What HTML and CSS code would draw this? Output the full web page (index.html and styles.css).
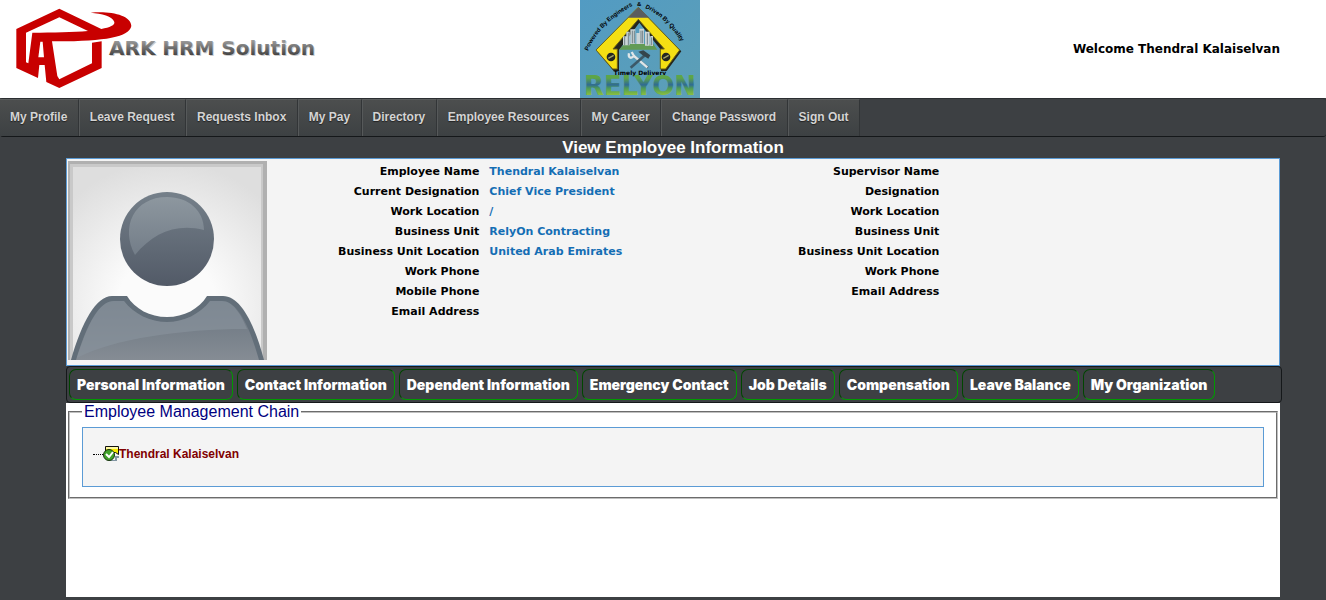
FILE: index.html
```html
<!DOCTYPE html>
<html lang="en">
<head>
<meta charset="utf-8">
<title>View Employee Information</title>
<link rel="stylesheet" href="styles.css">
</head>
<body>
<header class="header">
  <svg class="brand" width="330" height="98" viewBox="0 0 330 98" role="img" aria-label="ARK HRM Solution">
    <defs>
      <linearGradient id="steel" x1="0" y1="0" x2="0" y2="1"><stop offset="0.2" stop-color="#999"/><stop offset="0.8" stop-color="#444"/></linearGradient>
    </defs>
    <path transform="scale(.3333)" fill="#c80000" fill-rule="evenodd" d="M49 87 178 26 304 87C330 82 345 76 343 66C338 48 305 41 272 38C330 32 394 45 394 78C388 112 310 125 156 124L172 228 178 238 276 190V128L305 124V204L178 264 139 246 134 195H118L114 234 49 204ZM78 98V187L85 190 97 98C160 98 220 97 264 93L178 52ZM121 125H128L132 172H115Z"/>
    <text class="brand-shadow" x="110" y="56">ARK HRM Solution</text>
    <text class="brand-text" x="109" y="55" fill="url(#steel)">ARK HRM Solution</text>
  </svg>
  <svg class="client" width="120" height="98" viewBox="0 0 120 98" role="img" aria-label="Relyon, Timely Delivery">
    <defs>
      <linearGradient id="sky" x1="0" y1="0" x2="1" y2="1"><stop stop-color="#529bc3"/><stop offset="1" stop-color="#5d9fb6"/></linearGradient>
      <linearGradient id="metal" gradientUnits="userSpaceOnUse" x1="0" y1="78" x2="0" y2="95"><stop stop-color="#5da548"/><stop offset="0.4" stop-color="#2f6b93"/><stop offset="0.6" stop-color="#4d9a58"/><stop offset="1" stop-color="#8abf3f"/></linearGradient>
      <path id="arcLeft" d="M8 51Q20 22 56 4"/>
      <path id="arcRight" d="M65 8Q90 19 106 51"/>
    </defs>
    <path fill="url(#sky)" d="M0 0H120V98H0Z"/>
    <g transform="scale(.3333)">
      <path fill="#23251d" d="M178 26 51 154 101 213H117V150L178 68 243 150V213H260L304 154Z"/>
      <path fill="#f4df13" stroke="#6b6216" stroke-width="3" d="M175 22 48 150 98 207H112V147H99L175 58 253 147H241V207H257L299 150Z"/>
      <path fill="#5b5d5e" d="M175 22 144 53H208Z"/>
      <path fill="#629b55" d="M133 132H220L232 149H117Z"/>
      <path fill="#cbd5d7" d="M129 109H139V95H149V136H129ZM151 88H166V132H151ZM169 99H178V86H192V132H169ZM195 95H209V137H195ZM211 108H219V138H211Z"/>
      <path stroke="#708187" stroke-width="3" d="M134 109V136M145 98V136M157 92V130M163 92V130M183 92V130M188 92V130M202 100V134M215 112V136"/>
      <path stroke="#4e606c" stroke-width="7" d="M158 165 204 203"/>
      <path fill="none" stroke="#dfe6e8" stroke-width="7" d="M147 160C144 174 153 177 162 168L155 156M162 168 202 202"/>
      <path stroke="#3c5968" stroke-width="8" d="M193 167 152 203"/>
      <path fill="#34444c" d="M175 155 190 151 211 166 205 176 188 166Z"/>
      <g fill="#242722"><circle cx="93" cy="171" r="13"/><circle cx="258" cy="171" r="13"/></g>
      <path stroke="#a5a56a" stroke-width="4" d="M85 175 101 166M250 175 266 166"/>
    </g>
    <g class="motto">
      <text><textPath href="#arcLeft">Powered By Engineers</textPath></text>
      <text x="57" y="6">&amp;</text>
      <text><textPath href="#arcRight">Driven By Quality</textPath></text>
      <text class="motto-base" x="60" y="75" text-anchor="middle">Timely Delivery</text>
    </g>
    <text class="client-name" x="4" y="95" fill="url(#metal)">RELYON</text>
  </svg>
  <p class="welcome">Welcome Thendral Kalaiselvan</p>
</header>

<nav class="nav">
  <div class="nav-items">
    <a href="#">My Profile</a>
    <a href="#">Leave Request</a>
    <a href="#">Requests Inbox</a>
    <a href="#">My Pay</a>
    <a href="#">Directory</a>
    <a href="#">Employee Resources</a>
    <a href="#">My Career</a>
    <a href="#">Change Password</a>
    <a href="#">Sign Out</a>
  </div>
</nav>

<main class="page">
  <h1 class="title">View Employee Information</h1>
  <section class="info">
    <svg class="photo" width="199" height="199" viewBox="0 0 199 199" role="img" aria-label="Employee photo">
      <defs>
        <radialGradient id="backdrop" cx="0.5" cy="0.72" r="0.75"><stop offset="0.35" stop-color="#fbfbfb"/><stop offset="1" stop-color="#dedede"/></radialGradient>
        <linearGradient id="head" x1="0" y1="0" x2="0" y2="1"><stop stop-color="#75808a"/><stop offset="1" stop-color="#525a67"/></linearGradient>
        <linearGradient id="shine" x1="0" y1="0" x2="0" y2="1"><stop stop-color="#8d979f"/><stop offset="1" stop-color="#737d88"/></linearGradient>
        <linearGradient id="torso" x1="0" y1="0" x2="0" y2="1"><stop stop-color="#69747f"/><stop offset="1" stop-color="#858c94"/></linearGradient>
      </defs>
      <path fill="#b0b0b0" d="M0 0H199V199H0Z"/>
      <path fill="#c9c9c9" d="M2 3H195V199H2Z"/>
      <path fill="url(#backdrop)" d="M5 6H193V199H5Z"/>
      <circle cx="99" cy="78" r="47" fill="url(#head)"/>
      <path fill="url(#shine)" d="M67 94C52 66 66 36 99 36C121 36 136 50 136 69C108 62 85 72 67 94Z"/>
      <path fill="#626e79" d="M3 199C14 161 28 135 44 135H59C67 148 82 156 99 156S131 148 139 135H155C172 135 186 161 196 199Z"/>
      <path fill="url(#torso)" d="M8 199C19 163 31 140 46 140H56C66 153 82 161 99 161S132 153 142 140H154C169 140 181 163 191 199Z"/>
      <path fill="#87929b" opacity=".7" d="M9 197C20 162 31 140 46 140H56C66 153 82 161 99 161S132 153 142 140H154C165 140 173 153 179 168C112 168 45 178 9 197Z"/>
    </svg>
    <div class="facts-wrap">
      <table class="facts">
        <colgroup><col class="label-col"><col class="value-col"><col class="label-col"><col></colgroup>
        <tr><th>Employee Name</th><td>Thendral Kalaiselvan</td><th>Supervisor Name</th><td></td></tr>
        <tr><th>Current Designation</th><td>Chief Vice President</td><th>Designation</th><td></td></tr>
        <tr><th>Work Location</th><td>/</td><th>Work Location</th><td></td></tr>
        <tr><th>Business Unit</th><td>RelyOn Contracting</td><th>Business Unit</th><td></td></tr>
        <tr><th>Business Unit Location</th><td>United Arab Emirates</td><th>Business Unit Location</th><td></td></tr>
        <tr><th>Work Phone</th><td></td><th>Work Phone</th><td></td></tr>
        <tr><th>Mobile Phone</th><td></td><th>Email Address</th><td></td></tr>
        <tr><th>Email Address</th><td></td><th></th><td></td></tr>
      </table>
    </div>
  </section>

  <div class="tabs">
    <button type="button">Personal Information</button>
    <button type="button">Contact Information</button>
    <button type="button">Dependent Information</button>
    <button type="button">Emergency Contact</button>
    <button type="button">Job Details</button>
    <button type="button">Compensation</button>
    <button type="button">Leave Balance</button>
    <button type="button">My Organization</button>
  </div>

  <section class="panel">
    <fieldset class="chain">
      <legend>Employee Management Chain</legend>
      <div class="tree">
        <span class="branch"></span>
        <svg class="node" width="16" height="16" viewBox="0 0 16 16" aria-hidden="true">
          <path fill="#8296a3" d="M6 14H12V10H16V12H14V15H6Z"/>
          <path fill="#f5e900" stroke="#111" d="M2.500 .5H15.500V8.500L12.500 6.500H2.500Z"/>
          <path fill="#fff9a0" d="M3 1H15V3H3Z"/>
          <circle cx="6" cy="9" r="5.500" fill="#42a32c" stroke="#17330f"/>
          <path fill="none" stroke="#fff" stroke-width="2" d="M3 8 6 11 10 6"/>
        </svg>
        <a href="#">Thendral Kalaiselvan</a>
      </div>
    </fieldset>
  </section>
</main>
</body>
</html>
```
FILE: styles.css
```css
* { box-sizing: border-box; }
body {
  margin: 0;
  background: #3d4043;
  font-family: "Liberation Sans", Arial, sans-serif;
}
.header {
  display: grid;
  grid-template-columns: 580px 120px 1fr;
  align-items: center;
  height: 98px;
  background: #fff;
}
.brand, .client { display: block; }
.brand-text, .brand-shadow {
  font: bold 20px "DejaVu Sans", Verdana, sans-serif;
}
.brand-shadow { fill: #ccc; }
.motto { font: bold 6px "Liberation Sans", Arial, sans-serif; }
.motto-base { font-family: "DejaVu Sans", Verdana, sans-serif; }
.client-name {
  font: bold 26px "DejaVu Sans", Verdana, sans-serif;
}
.welcome {
  margin: 0;
  padding-right: 46px;
  text-align: right;
  font: bold 12px "DejaVu Sans", Verdana, sans-serif;
  color: #000;
}
.nav {
  height: 39px;
  border-top: 1px solid #2b2e31;
  border-bottom: 1px solid #15181a;
  border-radius: 3px;
}
.nav-items { display: flex; max-width: 860px; }
.nav a {
  flex: 1 1 auto;
  height: 37px;
  padding: 0 10px;
  border-left: 1px solid #56595a;
  border-right: 1px solid #323537;
  border-top: 1px solid #5a5d5d;
  background: linear-gradient(#4c4e4e, #3d4143);
  color: #d4d4d4;
  font-size: 12px;
  font-weight: bold;
  line-height: 34px;
  text-decoration: none;
  text-shadow: 0 1px 1px #222;
  white-space: nowrap;
}
.nav a:first-child { border-left: 0; }
.page { margin: 0 46px 3px 66px; }
.title {
  margin: 0;
  color: #fff;
  font-size: 17px;
  line-height: 21px;
  text-align: center;
}
.info {
  display: flex;
  align-items: flex-start;
  padding: 2px 1px 4px;
  border: 1px solid #5b9bd5;
  background: #f4f4f4;
}
.photo { display: block; flex: none; margin-bottom: 1px; }
.facts-wrap { flex: 1; }
.facts {
  width: 100%;
  table-layout: fixed;
  border-collapse: collapse;
  font: bold 11px "DejaVu Sans", Verdana, sans-serif;
}
.label-col { width: 21.5%; }
.value-col { width: 24%; }
.facts th, .facts td { height: 20px; padding: 0 5px; }
.facts th { text-align: right; color: #000; }
.facts td { text-align: left; color: #146eb4; }
.tabs {
  display: flex;
  gap: 4px;
  margin-right: -2px;
  padding: 2px;
  border: 1px solid #15181a;
  border-radius: 4px;
}
.tabs button {
  height: 31px;
  padding: 0 7px;
  border: 1px inset #009a00;
  border-radius: 7px;
  background: none;
  color: #fff;
  font: 900 14px Inter, "Arial Black", sans-serif;
  white-space: nowrap;
}
.panel {
  min-height: 194px;
  padding: 0 2px;
  background: #fff;
}
.chain {
  margin: 0;
  padding: 6px 12px 10px;
  border: 2px groove #c0c0c0;
}
.chain legend { padding: 0 2px; color: #000080; font-size: 16px; line-height: 18px; }
.tree {
  display: flex;
  align-items: center;
  height: 60px;
  padding: 0 10px 6px;
  border: 1px solid #5b9bd5;
  background: #f4f4f4;
}
.branch { width: 10px; border-top: 1px dotted #000; }
.tree a { color: #800000; font-size: 12px; font-weight: bold; text-decoration: none; }
```
